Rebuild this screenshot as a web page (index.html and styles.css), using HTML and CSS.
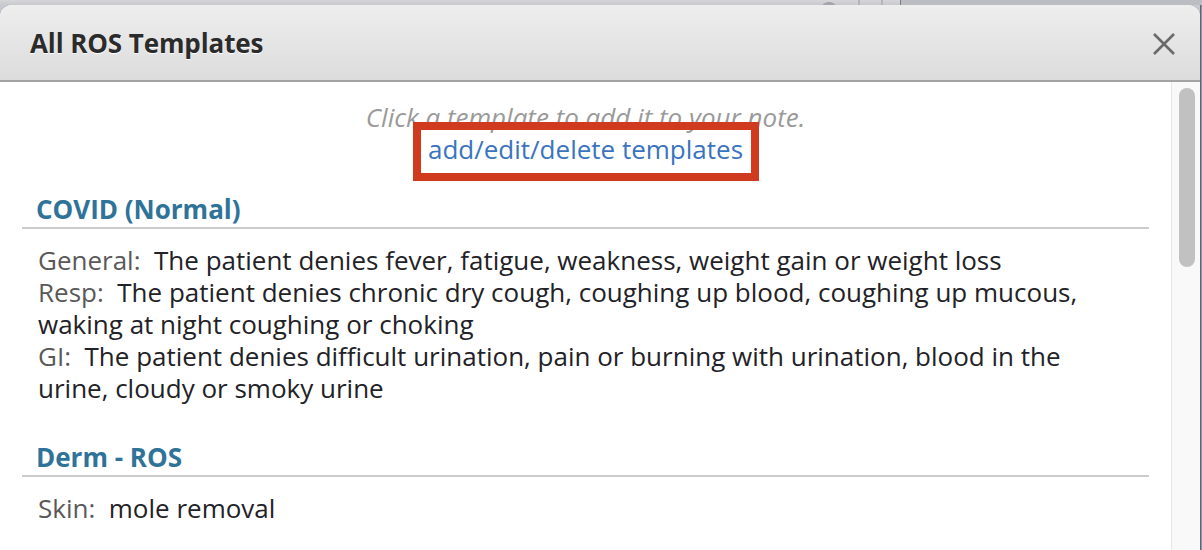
FILE: index.html
```html
<!DOCTYPE html>
<html>
<head>
<meta charset="utf-8">
<link rel="stylesheet" href="styles.css">
</head>
<body>
<div class="backdrop">
  <div class="bg-strip">
    <span class="bg-dot"></span>
    <span class="bg-sep bg-sep1"></span>
    <span class="bg-sep bg-sep2"></span>
    <span class="bg-bar"></span>
  </div>
  <div class="stage">
    <div class="dialog">
      <div class="dialog-header">
        <h1 class="dialog-title">All ROS Templates</h1>
        <button class="close-btn" aria-label="Close">
          <svg width="24" height="24" viewBox="0 0 24 24"><path d="M2 2 L22 22 M22 2 L2 22" stroke="#6a6a6a" stroke-width="2.6" stroke-linecap="butt"/></svg>
        </button>
      </div>
      <div class="dialog-body">
        <div class="content">
          <p class="hint">Click a template to add it to your note.</p>
          <p class="manage"><a class="manage-link" href="#">add/edit/delete templates</a><span class="highlight-box"></span></p>

          <div class="template">
            <h2 class="template-name">COVID (Normal)</h2>
            <div class="template-text">
              <div class="row"><span class="label">General:</span>&nbsp; The patient denies fever, fatigue, weakness, weight gain or weight loss</div>
              <div class="row"><span class="label">Resp:</span>&nbsp; The patient denies chronic dry cough, coughing up blood, coughing up mucous, waking at night coughing or choking</div>
              <div class="row"><span class="label">GI:</span>&nbsp; The patient denies difficult urination, pain or burning with urination, blood in the urine, cloudy or smoky urine</div>
            </div>
          </div>

          <div class="template">
            <h2 class="template-name">Derm - ROS</h2>
            <div class="template-text">
              <div class="row"><span class="label">Skin:</span>&nbsp; mole removal</div>
            </div>
          </div>
        </div>
        <div class="scrolltrack"><div class="scrollthumb"></div></div>
      </div>
    </div>
    <div class="edge-col"></div>
  </div>
</div>
</body>
</html>
```
FILE: styles.css
```css
html, body {
  margin: 0;
  padding: 0;
  height: 100%;
  overflow: hidden;
}
body {
  font-family: "Open Sans", "Noto Sans", sans-serif;
  background: #c9cacf;
}
.backdrop {
  width: 1202px;
  height: 550px;
  display: flex;
  flex-direction: column;
}
.bg-strip {
  height: 5px;
  position: relative;
  background: linear-gradient(#d6d6da, #c8c9cd);
  flex: none;
  overflow: hidden;
}
.bg-dot {
  position: absolute;
  left: 822px;
  top: 2px;
  width: 14px;
  height: 10px;
  border-radius: 50%;
  background: #a4a5aa;
}
.bg-sep {
  position: absolute;
  top: 0;
  width: 2px;
  height: 5px;
  background: #b4b5b9;
}
.bg-sep1 { left: 858px; }
.bg-sep2 { left: 881px; }
.bg-bar {
  position: absolute;
  left: 900px;
  top: 0;
  width: 302px;
  height: 5px;
  background: #bcbdc2;
  border-left: 1px solid #7c7d83;
}
.stage {
  flex: 1;
  display: flex;
}
.dialog {
  width: 1200px;
  flex: none;
  display: flex;
  flex-direction: column;
  background: #fff;
  border-radius: 12px 12px 0 0;
  overflow: hidden;
  box-shadow: 0 0 0 1px #b9bcc4;
}
.edge-col {
  flex: 1;
  background: #8b93a5;
  border-left: 1px solid #5c6476;
}
.dialog-header {
  height: 75px;
  flex: none;
  display: flex;
  align-items: center;
  justify-content: space-between;
  padding: 0 24px 0 30px;
  background: linear-gradient(#eeeeef, #dcdcdc);
  border-bottom: 2px solid #a3a3a3;
}
.dialog-title {
  margin: 0;
  font-size: 26px;
  font-weight: 700;
  color: #2b2b2b;
  text-shadow: 0 1px 0 #ffffff;
  letter-spacing: -0.1px;
}
.close-btn {
  border: 0;
  background: none;
  padding: 0;
  width: 24px;
  height: 24px;
  display: flex;
  margin-top: 2px;
}
.dialog-body {
  flex: 1;
  display: flex;
  min-height: 0;
}
.content {
  flex: 1;
  padding: 19px 22px 0 22px;
  overflow: hidden;
}
.hint {
  margin: 0;
  text-align: center;
  font-style: italic;
  font-size: 26px;
  line-height: 32px;
  color: #9a9a9a;
}
.manage {
  margin: 0;
  text-align: center;
  font-size: 26px;
  line-height: 32px;
  position: relative;
}
.manage-link {
  color: #3a74bf;
  text-decoration: none;
}
.highlight-box {
  position: absolute;
  left: 391px;
  top: -11px;
  width: 330px;
  height: 43px;
  border: 8px solid #d03b20;
}
.template {
  margin-top: 28px;
}
.template + .template {
  margin-top: 37px;
}
.template-name {
  margin: 0;
  padding: 0 0 2px 14px;
  font-size: 26px;
  line-height: 32px;
  font-weight: 700;
  color: #2f7399;
  border-bottom: 2px solid #cbcbcb;
}
.template-text {
  padding: 15px 16px 0 16px;
  font-size: 26px;
  line-height: 32px;
  color: #1f2227;
}
.label {
  color: #595959;
}
.scrolltrack {
  width: 29px;
  flex: none;
  background: #f9f9f9;
  border-left: 1px solid #e6e6e6;
  padding: 6px 0 0 7px;
  box-sizing: border-box;
}
.scrollthumb {
  width: 16px;
  height: 179px;
  background: #c1c1c1;
  border-radius: 8px;
}
```
